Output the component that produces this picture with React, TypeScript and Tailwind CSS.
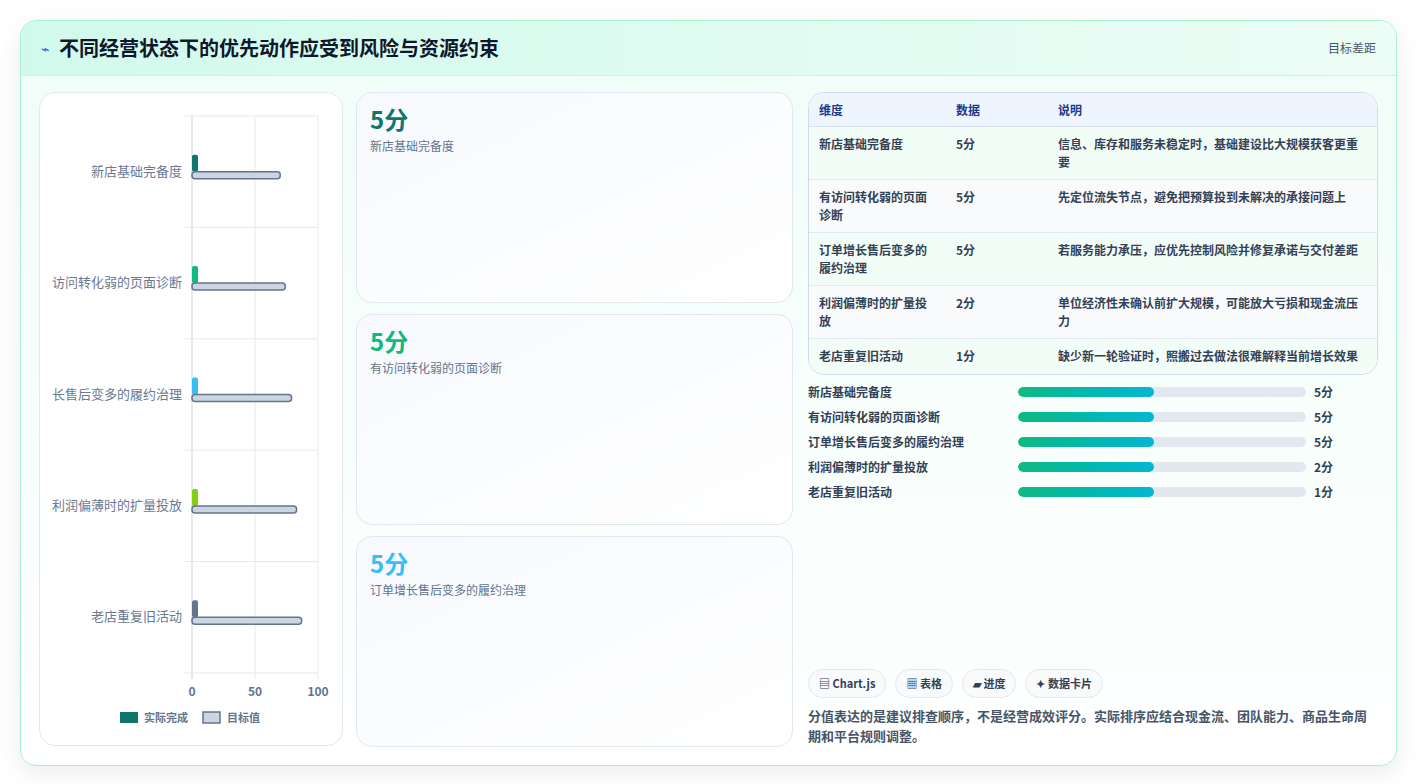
import React from "react";

const rows = [
  { name: "新店基础完备度", v: "5分", d: "信息、库存和服务未稳定时，基础建设比大规模获客更重要" },
  { name: "有访问转化弱的页面诊断", v: "5分", d: "先定位流失节点，避免把预算投到未解决的承接问题上" },
  { name: "订单增长售后变多的履约治理", v: "5分", d: "若服务能力承压，应优先控制风险并修复承诺与交付差距" },
  { name: "利润偏薄时的扩量投放", v: "2分", d: "单位经济性未确认前扩大规模，可能放大亏损和现金流压力" },
  { name: "老店重复旧活动", v: "1分", d: "缺少新一轮验证时，照搬过去做法很难解释当前增长效果" },
];
const chartLabels = ["新店基础完备度", "访问转化弱的页面诊断", "长售后变多的履约治理", "利润偏薄时的扩量投放", "老店重复旧活动"];
const colors = ["#0f766e", "#10b981", "#38bdf8", "#84cc16", "#64748b"];
const targets = [70, 74, 79, 83, 87];

function Chart() {
  const x0 = 152, pw = 126, top = 23, bottom = 580;
  const rh = (bottom - top) / 5;
  return (
    <svg width="302" height="652" className="block">
      {[0, 1, 2, 3, 4, 5].map((i) => (
        <line key={i} x1={x0 - 8} x2={x0 + pw} y1={top + i * rh} y2={top + i * rh} stroke="#e5e9f0" />
      ))}
      {[0, 50, 100].map((t, i) => (
        <g key={t}>
          <line x1={x0 + (t / 100) * pw} x2={x0 + (t / 100) * pw} y1={top} y2={bottom + 6} stroke={i === 0 ? "#cbd5e1" : "#e5e9f0"} />
          <text x={x0 + (t / 100) * pw} y={bottom + 23} textAnchor="middle" fontSize="12" fontWeight="700" fill="#64748b">{t}</text>
        </g>
      ))}
      {chartLabels.map((l, i) => {
        const c = top + i * rh + rh / 2;
        return (
          <g key={l}>
            <text x={x0 - 10} y={c + 4} textAnchor="end" fontSize="13" fill="#6b7890">{l}</text>
            <rect x={x0} y={c - 17} width={6} height={17} rx={2} fill={colors[i]} />
            <rect x={x0} y={c} width={(targets[i] / 100) * pw} height={7} rx={3} fill="#cbd5e1" stroke="#64748b" strokeWidth="1.5" />
          </g>
        );
      })}
      <rect x={80} y={619} width={18} height={11} fill="#0f766e" />
      <text x={104} y={629} fontSize="11" fontWeight="600" fill="#64748b">实际完成</text>
      <rect x={163} y={619} width={17} height={11} fill="#cbd5e1" stroke="#64748b" strokeWidth="1.5" />
      <text x={187} y={629} fontSize="11" fontWeight="600" fill="#64748b">目标值</text>
    </svg>
  );
}

export default function App() {
  return (
    <div className="w-[1417px] h-[784px] bg-white pt-[20px] pl-[20px]" style={{ fontFamily: '"Noto Sans CJK SC", "Noto Sans", sans-serif' }}>
      <div className="w-[1377px] h-[746px] rounded-2xl border border-[#a7f3d0] overflow-hidden shadow-[0_8px_24px_rgba(15,23,42,0.08)] bg-gradient-to-b from-[#effdf8] to-white flex flex-col">
        <div className="h-[55px] shrink-0 flex items-center justify-between px-[20px] bg-gradient-to-r from-[#d1faec] to-[#ecfdf6] border-b border-[#d5efe6]">
          <div className="flex items-center gap-[10px]">
            <span className="text-[#2563eb] text-[14px]">⌁</span>
            <span className="text-[20px] font-bold text-[#0f172a]">不同经营状态下的优先动作应受到风险与资源约束</span>
          </div>
          <span className="text-[12px] text-[#475569]">目标差距</span>
        </div>
        <div className="flex gap-[13px] pt-[16px] pl-[18px] pr-[18px]">
          <div className="w-[304px] h-[654px] bg-white rounded-2xl border border-[#e2e8f0]">
            <Chart />
          </div>
          <div className="w-[437px] flex flex-col gap-[11px]">
            {[0, 1, 2].map((i) => (
              <div key={i} className="h-[211px] rounded-2xl border border-[#e2e8f0] bg-gradient-to-br from-[#f7f9fd] to-white px-[13px] pt-[10px]">
                <div className="text-[24px] font-bold leading-[32px]" style={{ color: colors[i] }}>5分</div>
                <div className="text-[12px] text-[#64748b] mt-[2px]">{rows[i].name}</div>
              </div>
            ))}
          </div>
          <div className="w-[570px] ml-[2px] flex flex-col">
            <div className="rounded-2xl border border-[#cfdbea] overflow-hidden bg-white">
              <div className="flex h-[34px] items-center bg-[#eef5fe] border-b border-[#d6e2f0] text-[12px] font-bold text-[#1e3a8a]">
                <div className="w-[147px] pl-[10px]">维度</div>
                <div className="w-[102px]">数据</div>
                <div className="flex-1">说明</div>
              </div>
              {rows.map((r, i) => (
                <div key={r.name} className={`flex pt-[8px] text-[12px] font-semibold text-[#334155] leading-[18px] ${i < 4 ? "h-[53px] border-b border-[#e2eaf3]" : "h-[35px]"} ${i % 2 === 0 ? "bg-[#f3fdf8]" : "bg-[#f8fafc]"}`}>
                  <div className="w-[147px] pl-[10px] pr-[22px]">{r.name}</div>
                  <div className="w-[102px]">{r.v}</div>
                  <div className="flex-1 pr-[16px]">{r.d}</div>
                </div>
              ))}
            </div>
            <div className="flex flex-col gap-[7px] mt-[8px]">
              {rows.map((r) => (
                <div key={r.name} className="flex items-center h-[18px] text-[12px] font-semibold text-[#334155]">
                  <div className="w-[210px]">{r.name}</div>
                  <div className="w-[288px] h-[10px] rounded-full bg-[#e2e8f0] overflow-hidden">
                    <div className="h-full w-[136px] rounded-full bg-gradient-to-r from-[#10b981] to-[#06b6d4]" />
                  </div>
                  <div className="ml-[8px] font-bold">{r.v}</div>
                </div>
              ))}
            </div>
            <div className="flex gap-[9px] mt-[168px]">
              {["▤ Chart.js", "▦ 表格", "▰ 进度", "✦ 数据卡片"].map((c) => (
                <span key={c} className="h-[29px] px-[10px] flex items-center rounded-full border border-[#e2e8f0] bg-[#f8fafc] text-[11px] font-semibold text-[#334155]">{c}</span>
              ))}
            </div>
            <p className="mt-[8px] text-[13px] leading-[20px] font-semibold text-[#475569] pr-[10px]">
              分值表达的是建议排查顺序，不是经营成效评分。实际排序应结合现金流、团队能力、商品生命周期和平台规则调整。
            </p>
          </div>
        </div>
      </div>
    </div>
  );
}
